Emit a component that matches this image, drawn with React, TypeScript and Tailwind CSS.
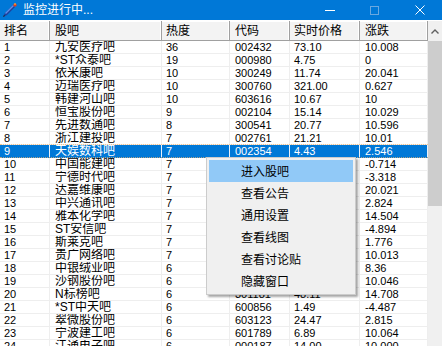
import React from 'react';

const cols = [
  { w: 'w-[50px]', pad: 'pl-[4px]' },
  { w: 'w-[112px]', pad: 'pl-[5px]' },
  { w: 'w-[68px]', pad: 'pl-[4px]' },
  { w: 'w-[60px]', pad: 'pl-[5px]' },
  { w: 'w-[70px]', pad: 'pl-[4px]' },
  { w: 'w-[68px]', pad: 'pl-[5px]' },
];

const headers = ['排名', '股吧', '热度', '代码', '实时价格', '涨跌'];

const rows: string[][] = [
  ['1', '九安医疗吧', '36', '002432', '73.10', '10.008'],
  ['2', '*ST众泰吧', '19', '000980', '4.75', '0'],
  ['3', '依米康吧', '10', '300249', '11.74', '20.041'],
  ['4', '迈瑞医疗吧', '10', '300760', '321.00', '0.627'],
  ['5', '韩建河山吧', '10', '603616', '10.67', '10'],
  ['6', '恒宝股份吧', '9', '002104', '15.14', '10.029'],
  ['7', '先进数通吧', '8', '300541', '20.77', '10.596'],
  ['8', '浙江建投吧', '7', '002761', '21.21', '10.01'],
  ['9', '天娱数科吧', '7', '002354', '4.43', '2.546'],
  ['10', '中国能建吧', '7', '601868', '2.78', '-0.714'],
  ['11', '宁德时代吧', '7', '300750', '524.50', '-3.318'],
  ['12', '达嘉维康吧', '7', '301126', '30.40', '20.021'],
  ['13', '中兴通讯吧', '7', '000063', '28.35', '2.824'],
  ['14', '雅本化学吧', '7', '300261', '12.46', '14.504'],
  ['15', 'ST安信吧', '7', '600816', '3.41', '-4.894'],
  ['16', '斯莱克吧', '7', '300382', '16.02', '1.776'],
  ['17', '贵广网络吧', '7', '600996', '5.49', '10.013'],
  ['18', '中银绒业吧', '6', '000982', '2.22', '8.36'],
  ['19', '沙钢股份吧', '6', '002075', '6.03', '10.046'],
  ['20', 'N标榜吧', '6', '301181', '48.11', '14.708'],
  ['21', '*ST中天吧', '6', '600856', '1.49', '-4.487'],
  ['22', '翠微股份吧', '6', '603123', '24.47', '2.815'],
  ['23', '宁波建工吧', '6', '601789', '6.89', '10.064'],
  ['24', '江通电子吧', '6', '000187', '14.00', '10.000'],
];

const menuItems = ['进入股吧', '查看公告', '通用设置', '查看线图', '查看讨论贴', '隐藏窗口'];

function AppIcon() {
  return (
    <svg width="16" height="16" viewBox="0 0 16 16">
      <path d="M1 15 L3 11 L11 3 L13 5 L5 13 Z" fill="#1f3f9a" />
      <path d="M3 11 L11 3 L12 4 L4 12 Z" fill="#5d8ee8" />
      <path d="M11 3 L13 1 L15 3 L13 5 Z" fill="#e23a1c" />
      <path d="M12 2 L13 1 L14 2 L13 3 Z" fill="#f6c343" />
      <path d="M1 15 L2 13 L3 14 Z" fill="#222" />
    </svg>
  );
}

export default function App() {
  return (
    <div className="relative w-[442px] h-[346px] overflow-hidden bg-white font-['Liberation_Sans','Noto_Sans_CJK_SC',sans-serif] text-black">
      {/* Title bar */}
      <div className="h-[20px] bg-[#0078d7] flex items-center text-white">
        <div className="ml-[2px] w-[16px] h-[16px]">
          <AppIcon />
        </div>
        <span className="ml-[5px] text-[12px] leading-none">监控进行中...</span>
        <div className="ml-auto flex items-center h-full">
          <div className="w-[45px] h-full flex items-center justify-center">
            <div className="w-[10px] h-px bg-white" />
          </div>
          <div className="w-[45px] h-full flex items-center justify-center">
            <div className="w-[9px] h-[9px] border border-[#6aa8e0]" />
          </div>
          <div className="w-[45px] h-full flex items-center justify-center">
            <svg width="10" height="10" viewBox="0 0 10 10">
              <path d="M0.5 0.5 L9.5 9.5 M9.5 0.5 L0.5 9.5" stroke="white" strokeWidth="1" />
            </svg>
          </div>
        </div>
      </div>
      <div className="h-px bg-white" />

      <div className="flex">
        {/* Grid */}
        <div className="w-[428px]">
          <div className="flex h-[20px] bg-[#f3f3f3] border-b border-[#a0a0a0]">
            {headers.map((h, i) => (
              <div
                key={h}
                className={`${cols[i].w} ${cols[i].pad} flex items-center text-[12px] border-r border-[#a0a0a0] shadow-[inset_-1px_0_0_#ffffff,inset_0_1px_0_#ffffff]`}
              >
                {h}
              </div>
            ))}
          </div>
          {rows.map((r, ri) => {
            const sel = ri === 8;
            return (
              <div
                key={r[0]}
                className={`relative flex h-[13px] border-b ${sel ? 'bg-[#0078d7] text-white border-[#0078d7]' : 'border-[#eeeeee]'}`}
              >
                {r.map((c, ci) => (
                  <div
                    key={ci}
                    className={`${cols[ci].w} ${cols[ci].pad} border-r ${sel ? 'border-[#e8f1fb]' : 'border-[#eeeeee]'} ${ci === 1 ? 'text-[12px]' : 'text-[11px]'} leading-[12px] whitespace-nowrap overflow-hidden`}
                  >
                    {c}
                  </div>
                ))}
                {sel && (
                  <div className="absolute inset-x-0 -top-px -bottom-px border-y border-dotted border-[#f7b267]/70 pointer-events-none" />
                )}
              </div>
            );
          })}
        </div>

        {/* Scrollbar */}
        <div className="w-[14px] h-[325px] bg-[#f0f0f0] flex flex-col">
          <div className="h-[20px] flex items-center justify-center">
            <svg width="8" height="5" viewBox="0 0 8 5">
              <path d="M0.5 4.5 L4 1 L7.5 4.5" stroke="#606060" strokeWidth="1.4" fill="none" />
            </svg>
          </div>
          <div className="h-[165px] bg-[#cdcdcd]" />
        </div>
      </div>

      {/* Context menu */}
      <div className="absolute left-[206px] top-[157px] w-[150px] bg-[#f0f0f0] border border-[#cccccc] p-[2px] shadow-[2px_2px_2px_rgba(0,0,0,0.35)]">
        {menuItems.map((m, i) => (
          <div
            key={m}
            className={`h-[22px] pl-[32px] flex items-center text-[12px] font-['Noto_Sans_CJK_SC',sans-serif] ${i === 0 ? 'bg-[#91c9f7]' : ''}`}
          >
            {m}
          </div>
        ))}
      </div>
    </div>
  );
}
